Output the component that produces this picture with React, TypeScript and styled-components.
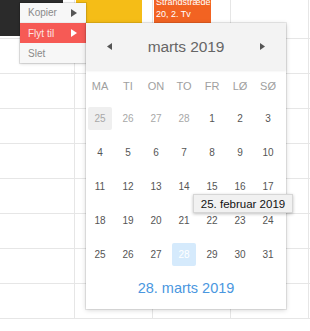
import React from "react";
import styled, { createGlobalStyle } from "styled-components";

const Global = createGlobalStyle`
  html, body { margin: 0; padding: 0; background: #fff; }
  body { font-family: "Liberation Sans", Arial, sans-serif; }
`;

const Page = styled.div`
  position: relative;
  width: 310px;
  height: 331px;
  overflow: hidden;
  background: #fff;
`;

const Schedule = styled.div`
  display: grid;
  grid-template-columns: 75px 78px 78px 78px 1fr;
  grid-template-rows: 39px repeat(8, 35px);
`;

const Cell = styled.div<{ $last?: boolean }>`
  border-bottom: 1px solid #e6e6e6;
  border-right: ${(p) => (p.$last ? "none" : "1px solid #e6e6e6")};
  box-sizing: border-box;
  display: flex;
  align-items: flex-start;
`;

const Event = styled.div<{ $bg: string; $w: number; $ml: number }>`
  background: ${(p) => p.$bg};
  width: ${(p) => p.$w}px;
  margin-left: ${(p) => p.$ml}px;
  height: 36px;
  overflow: hidden;
  color: #fff;
  font-size: 9px;
  line-height: 12px;
  white-space: nowrap;
  box-sizing: border-box;
  padding-left: 2px;
`;

const EventText = styled.div`
  margin-top: -4px;
`;

const Menu = styled.div`
  position: absolute;
  left: 20px;
  top: 3px;
  width: 66px;
  background: #f7f7f7;
  box-shadow: 0 0 0 1px rgba(0, 0, 0, 0.1), 0 1px 3px rgba(0, 0, 0, 0.15);
  display: flex;
  flex-direction: column;
`;

const MenuItem = styled.div<{ $active?: boolean }>`
  height: 20px;
  display: flex;
  align-items: center;
  justify-content: space-between;
  padding: 0 9px 0 8px;
  font-size: 10px;
  color: ${(p) => (p.$active ? "#fde3e1" : "#8a8a8a")};
  background: ${(p) => (p.$active ? "#f65a55" : "transparent")};
  border-bottom: ${(p) => (p.$active ? "none" : "1px solid #ececec")};
  box-sizing: border-box;
  &:last-child { border-bottom: none; }
`;

const Tri = ({ dir, color, w, h }: { dir: "l" | "r"; color: string; w: number; h: number }) => (
  <svg width={w} height={h} viewBox={`0 0 ${w} ${h}`} style={{ display: "block" }}>
    <polygon
      points={dir === "r" ? `0,0 ${w},${h / 2} 0,${h}` : `${w},0 0,${h / 2} ${w},${h}`}
      fill={color}
    />
  </svg>
);

const Popup = styled.div`
  position: absolute;
  left: 86px;
  top: 23px;
  width: 200px;
  background: #fff;
  box-shadow: 0 0 0 1px rgba(0, 0, 0, 0.08), 0 1px 5px rgba(0, 0, 0, 0.18);
  display: flex;
  flex-direction: column;
  padding-bottom: 4px;
`;

const Header = styled.div`
  height: 47px;
  background: #f3f3f3;
  display: flex;
  align-items: center;
  justify-content: space-between;
  padding: 0 21px;
  box-shadow: 0 1px 2px rgba(0, 0, 0, 0.08);
  position: relative;
  z-index: 1;
`;

const Title = styled.div`
  font-size: 15.5px;
  color: #666;
  letter-spacing: -0.1px;
`;

const Grid = styled.div`
  display: grid;
  grid-template-columns: repeat(7, 28px);
  padding-right: 4px;
`;

const WeekDay = styled.div`
  height: 31px;
  display: flex;
  align-items: center;
  justify-content: center;
  font-size: 11px;
  color: #a0a0a0;
  padding-top: 1px;
  box-sizing: border-box;
`;

const Day = styled.div`
  height: 34px;
  display: flex;
  align-items: center;
  justify-content: center;
`;

const DayBox = styled.div<{ $kind: "prev" | "cur" | "hover" | "sel" }>`
  width: 24px;
  height: 23px;
  border-radius: 2px;
  display: flex;
  align-items: center;
  justify-content: center;
  font-size: 10px;
  color: ${(p) =>
    p.$kind === "sel" ? "#fff" : p.$kind === "cur" ? "#555" : "#a8a8a8"};
  background: ${(p) =>
    p.$kind === "sel" ? "#d5eafc" : p.$kind === "hover" ? "#efefef" : "transparent"};
`;

const Footer = styled.div`
  height: 34px;
  display: flex;
  align-items: center;
  justify-content: center;
  font-size: 14.5px;
  color: #4a97e0;
`;

const Tooltip = styled.div`
  position: absolute;
  left: 107px;
  top: 171px;
  width: 100px;
  height: 19px;
  background: #f1f1f1;
  border: 1px solid #d6d6d6;
  box-shadow: 0 1px 3px rgba(0, 0, 0, 0.25);
  box-sizing: border-box;
  display: flex;
  align-items: center;
  justify-content: center;
  font-size: 11.5px;
  color: #111;
`;

const weekdays = ["MA", "TI", "ON", "TO", "FR", "LØ", "SØ"];

type D = { n: number; kind: "prev" | "cur" | "hover" | "sel" };
const days: D[] = [
  { n: 25, kind: "hover" },
  { n: 26, kind: "prev" },
  { n: 27, kind: "prev" },
  { n: 28, kind: "prev" },
  ...Array.from({ length: 31 }, (_, i) => ({
    n: i + 1,
    kind: (i + 1 === 28 ? "sel" : "cur") as D["kind"],
  })),
];

export default function App() {
  const rows = 9;
  const cols = 5;
  return (
    <Page>
      <Global />
      <Schedule>
        {Array.from({ length: rows * cols }, (_, i) => {
          const r = Math.floor(i / cols);
          const c = i % cols;
          let content: React.ReactNode = null;
          if (r === 0 && c === 0) content = <Event $bg="#2b2b2b" $w={63} $ml={0} />;
          if (r === 0 && c === 1) content = <Event $bg="#f5bd17" $w={66} $ml={1} />;
          if (r === 0 && c === 2)
            content = (
              <Event $bg="#f26322" $w={57} $ml={1}>
                <EventText>
                  Strandstræde
                  <br />
                  20, 2. Tv
                </EventText>
              </Event>
            );
          return (
            <Cell key={i} $last={c === cols - 1}>
              {content}
            </Cell>
          );
        })}
      </Schedule>

      <Menu>
        <MenuItem>
          Kopier <Tri dir="r" color="#555" w={6} h={8} />
        </MenuItem>
        <MenuItem $active>
          Flyt til <Tri dir="r" color="#fff" w={6} h={8} />
        </MenuItem>
        <MenuItem>Slet</MenuItem>
      </Menu>

      <Popup>
        <Header>
          <Tri dir="l" color="#555" w={5} h={7} />
          <Title>marts 2019</Title>
          <Tri dir="r" color="#555" w={5} h={7} />
        </Header>
        <Grid>
          {weekdays.map((w) => (
            <WeekDay key={w}>{w}</WeekDay>
          ))}
          {days.map((d, i) => (
            <Day key={i}>
              <DayBox $kind={d.kind}>{d.n}</DayBox>
            </Day>
          ))}
        </Grid>
        <Footer>28. marts 2019</Footer>
        <Tooltip>25. februar 2019</Tooltip>
      </Popup>
    </Page>
  );
}
